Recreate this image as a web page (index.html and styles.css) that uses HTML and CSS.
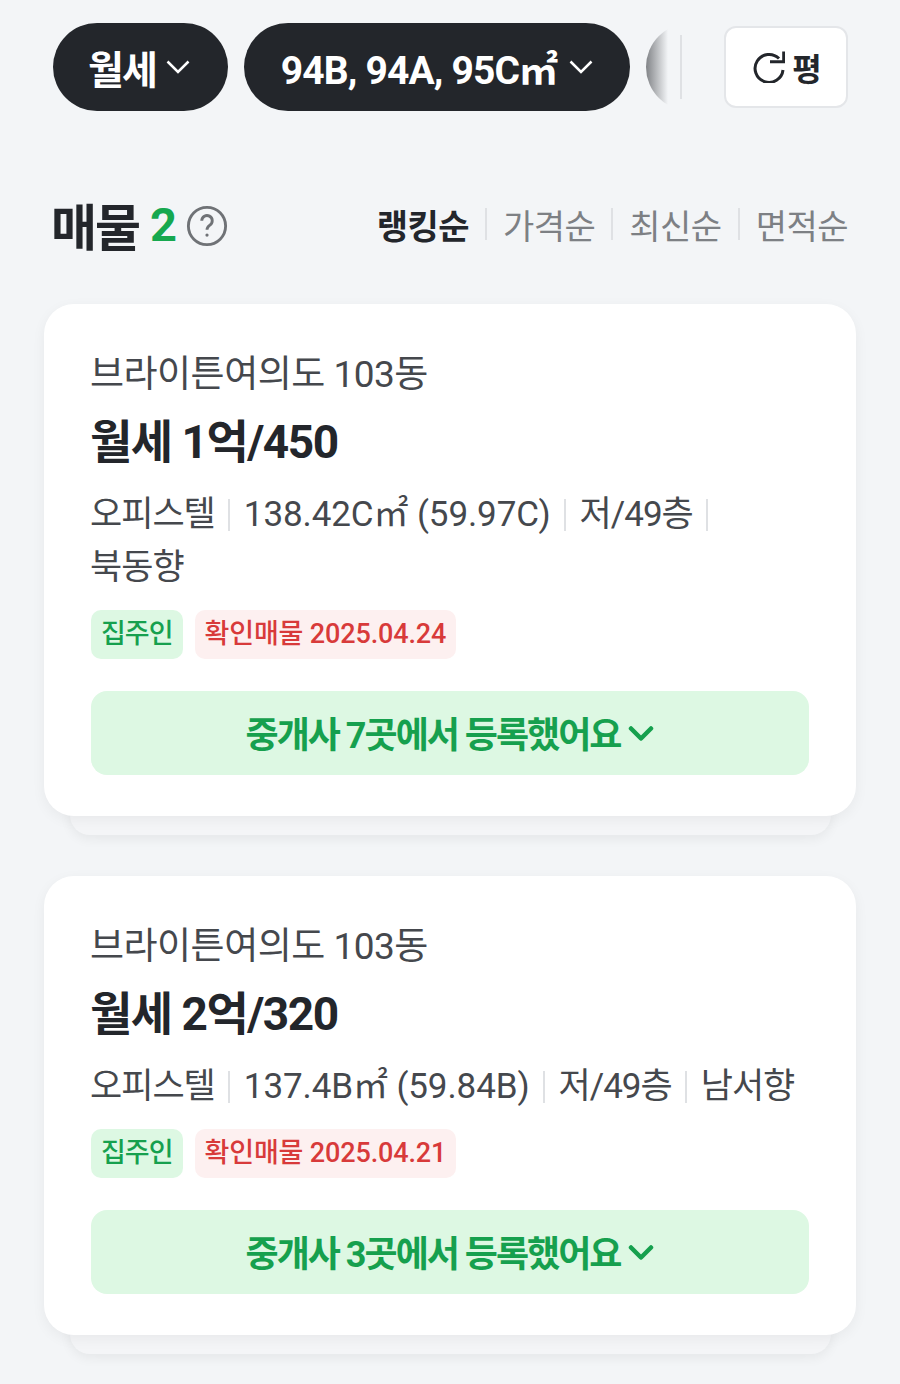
FILE: index.html
```html
<!DOCTYPE html>
<html lang="ko">
<head>
    <meta charset="UTF-8">
    <meta name="viewport" content="width=device-width, initial-scale=1.0">
    <title>매물</title>
    <link rel="stylesheet" href="styles.css">
</head>
<body>
    <div class="filter-bar">
        <div class="filter-scroll">
            <button class="pill pill-short">월세
                <svg class="pill-arrow" viewBox="0 0 24 14"><path d="M1.5 1.5 12 12 22.5 1.5"/></svg>
            </button>
            <button class="pill">94B, 94A, 95C㎡
                <svg class="pill-arrow" viewBox="0 0 24 14"><path d="M1.5 1.5 12 12 22.5 1.5"/></svg>
            </button>
            <button class="pill pill-next"></button>
            <div class="filter-fade"></div>
        </div>
        <div class="filter-line"></div>
        <button class="unit-button">
            <svg class="refresh-icon" viewBox="0 0 32 32"><path d="M26 7.500A14 14 0 1 0 30 19"/><path d="M17 10.700H30.700V.5"/></svg>
            평
        </button>
    </div>

    <div class="list-header">
        <div class="list-title">
            <h2>매물</h2>
            <span class="count">2</span>
            <svg class="help-icon" viewBox="0 0 44 44"><circle cx="22" cy="22" r="19.500"/><path d="M16.500 16.500a5.500 5.500 0 1 1 8.500 4.600c-2 1.400-3 2.400-3 4.900"/><circle class="help-dot" cx="22" cy="31.500" r="1.700"/></svg>
        </div>
        <div class="sort-menu">
            <span class="sort-item active">랭킹순</span>
            <span class="sort-item">가격순</span>
            <span class="sort-item">최신순</span>
            <span class="sort-item">면적순</span>
        </div>
    </div>

    <div class="list">
        <div class="card">
            <div class="card-name">브라이튼여의도 103동</div>
            <div class="card-price">월세 1억/450</div>
            <div class="card-spec">
                <span class="spec-kr">오피스텔</span>
                <span>138.42C㎡ (59.97C)</span>
                <span class="spec-kr">저/49층</span>
                <span class="spec-kr">북동향</span>
            </div>
            <div class="card-tags">
                <span class="tag tag-green">집주인</span>
                <span class="tag tag-red">확인매물 2025.04.24</span>
            </div>
            <button class="agent-button">중개사 7곳에서 등록했어요
                <svg class="agent-arrow" viewBox="0 0 26 18"><path d="M3 3.500 13 13.500 23 3.500"/></svg>
            </button>
        </div>

        <div class="card">
            <div class="card-name">브라이튼여의도 103동</div>
            <div class="card-price">월세 2억/320</div>
            <div class="card-spec">
                <span class="spec-kr">오피스텔</span>
                <span>137.4B㎡ (59.84B)</span>
                <span class="spec-kr">저/49층</span>
                <span class="spec-kr">남서향</span>
            </div>
            <div class="card-tags">
                <span class="tag tag-green">집주인</span>
                <span class="tag tag-red">확인매물 2025.04.21</span>
            </div>
            <button class="agent-button">중개사 3곳에서 등록했어요
                <svg class="agent-arrow" viewBox="0 0 26 18"><path d="M3 3.500 13 13.500 23 3.500"/></svg>
            </button>
        </div>
    </div>
</body>
</html>
```

FILE: styles.css
```css
* {
    box-sizing: border-box;
    margin: 0;
    padding: 0;
}

body {
    font-family: Roboto, "Noto Sans CJK KR", sans-serif;
    background-color: #f3f5f7;
    color: #23262b;
    height: 1384px;
    overflow: hidden;
}

button {
    font-family: inherit;
    border: none;
}

.filter-bar {
    display: flex;
    align-items: center;
    padding: 23px 52px 0 53px;
}

.filter-scroll {
    position: relative;
    display: flex;
    gap: 16px;
    width: 615px;
    overflow: hidden;
    flex-shrink: 0;
}

.pill {
    display: flex;
    align-items: center;
    justify-content: center;
    flex-shrink: 0;
    gap: 12px;
    width: 386px;
    height: 88px;
    border-radius: 44px;
    background-color: #23262b;
    color: #fff;
    font-size: 39px;
    font-weight: 700;
    letter-spacing: -0.850px;
    white-space: nowrap;
}

.pill-short {
    gap: 10px;
    width: 175px;
    padding: 0 3px 0 0;
    letter-spacing: -2px;
}

.pill-next {
    width: 120px;
}

.pill-arrow {
    width: 24px;
    height: 14px;
    fill: none;
    stroke: #fff;
    stroke-width: 2.500;
}

.filter-fade {
    position: absolute;
    top: 0;
    right: 0;
    width: 22px;
    height: 88px;
    background: linear-gradient(to right, rgba(243, 245, 247, 0.45), #f3f5f7);
}

.filter-line {
    width: 2px;
    height: 64px;
    margin-left: 12px;
    background-color: #dfe1e4;
}

.unit-button {
    display: flex;
    align-items: center;
    justify-content: center;
    gap: 7px;
    width: 124px;
    height: 82px;
    margin-left: auto;
    padding-left: 3px;
    border: 2px solid #e4e6e9;
    border-radius: 12px;
    background-color: #fff;
    color: #23262b;
    font-size: 32px;
    font-weight: 700;
}

.refresh-icon {
    width: 32px;
    height: 32px;
    fill: none;
    stroke: #23262b;
    stroke-width: 3;
}

.list-header {
    display: flex;
    align-items: center;
    justify-content: space-between;
    height: 60px;
    margin-top: 83px;
    padding: 0 52px 0 53px;
}

.list-title {
    display: flex;
    align-items: center;
    gap: 11px;
}

.list-title h2 {
    margin-left: -2px;
    font-size: 50px;
    font-weight: 700;
    letter-spacing: -2px;
}

.count {
    color: #16a84f;
    font-size: 47px;
    font-weight: 700;
}

.help-icon {
    width: 42px;
    height: 42px;
    margin: 4px 0 0 -2px;
    fill: none;
    stroke: #6f7276;
    stroke-width: 3;
}

.help-dot {
    fill: #6f7276;
    stroke: none;
}

.sort-menu {
    display: flex;
    align-items: center;
}

.sort-item {
    display: flex;
    align-items: center;
    color: #7d8084;
    font-size: 34px;
    letter-spacing: -0.500px;
}

.sort-item + .sort-item::before {
    content: "";
    width: 2px;
    height: 32px;
    margin: 0 16px;
    background-color: #dfe1e4;
}

.sort-item.active {
    color: #23262b;
    font-weight: 700;
}

.list {
    position: relative;
    z-index: 0;
    display: flex;
    flex-direction: column;
    gap: 60px;
    margin-top: 50px;
    padding: 0 44px;
}

.card {
    position: relative;
    padding: 46px 47px 41px;
    border-radius: 30px;
    background-color: #fff;
    box-shadow: 0 4px 14px rgba(0, 0, 0, 0.05);
}

/* the second sheet peeking out under each card */
.card::after {
    content: "";
    position: absolute;
    z-index: -1;
    left: 26px;
    right: 25px;
    bottom: -19px;
    height: 60px;
    border-radius: 0 0 20px 20px;
    background-color: #f4f5f7;
    box-shadow: 0 4px 12px rgba(0, 0, 0, 0.06);
}

.card-name {
    margin-left: -1px;
    color: #45484d;
    font-size: 37px;
    line-height: 50px;
    letter-spacing: -0.500px;
}

.card-price {
    margin: 12px 0 0 -1px;
    font-size: 46px;
    font-weight: 700;
    line-height: 60px;
    letter-spacing: -1.500px;
}

.card-spec {
    display: flex;
    flex-wrap: wrap;
    margin: 16px 0 0 -1px;
    color: #45484d;
    font-size: 35px;
    line-height: 53px;
    letter-spacing: -0.100px;
}

.card-spec span {
    display: flex;
    align-items: center;
}

.card-spec .spec-kr {
    letter-spacing: -1px;
}

.card-spec span:not(:last-child)::after {
    content: "";
    width: 2px;
    height: 32px;
    margin: 0 14px 0 13px;
    background-color: #dfe1e4;
}

.card-tags {
    display: flex;
    gap: 12px;
    margin-top: 16px;
}

.tag {
    height: 49px;
    padding: 0 10px;
    border-radius: 10px;
    font-size: 27px;
    font-weight: 500;
    line-height: 48px;
}

.tag-green {
    background-color: #ddf8e3;
    color: #16a04e;
    letter-spacing: -1px;
}

.tag-red {
    background-color: #fdf0f0;
    color: #d83a3a;
    letter-spacing: -0.150px;
}

.agent-button {
    display: flex;
    align-items: center;
    justify-content: center;
    gap: 8px;
    width: 100%;
    height: 84px;
    margin-top: 32px;
    padding-bottom: 2px;
    border-radius: 16px;
    background-color: #ddf8e3;
    color: #16a04e;
    font-size: 36px;
    font-weight: 700;
    letter-spacing: -2px;
}

.agent-arrow {
    width: 26px;
    height: 18px;
    margin-top: 4px;
    fill: none;
    stroke: #16a04e;
    stroke-width: 4.500;
    stroke-linecap: round;
    stroke-linejoin: round;
}
```
